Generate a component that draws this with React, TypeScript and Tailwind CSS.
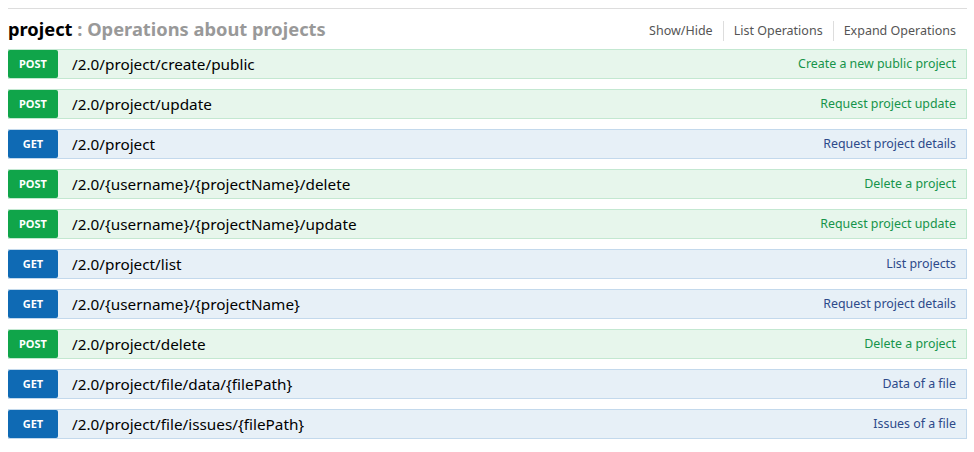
const ops = [
  { method: 'POST', path: '/2.0/project/create/public', summary: 'Create a new public project' },
  { method: 'POST', path: '/2.0/project/update', summary: 'Request project update' },
  { method: 'GET', path: '/2.0/project', summary: 'Request project details' },
  { method: 'POST', path: '/2.0/{username}/{projectName}/delete', summary: 'Delete a project' },
  { method: 'POST', path: '/2.0/{username}/{projectName}/update', summary: 'Request project update' },
  { method: 'GET', path: '/2.0/project/list', summary: 'List projects' },
  { method: 'GET', path: '/2.0/{username}/{projectName}', summary: 'Request project details' },
  { method: 'POST', path: '/2.0/project/delete', summary: 'Delete a project' },
  { method: 'GET', path: '/2.0/project/file/data/{filePath}', summary: 'Data of a file' },
  { method: 'GET', path: '/2.0/project/file/issues/{filePath}', summary: 'Issues of a file' },
];

function Operation({ method, path, summary }: { method: string; path: string; summary: string }) {
  const isGet = method === 'GET';
  return (
    <div
      className={
        isGet
          ? 'flex h-[30px] items-center border border-[#c3d9ec] bg-[#e7f0f7]'
          : 'flex h-[30px] items-center border border-[#c3e8d1] bg-[#e7f6ec]'
      }
    >
      <span
        className={
          isGet
            ? '-ml-px flex h-[28px] w-[50px] items-center justify-center rounded-[2px] bg-[#0f6ab4] text-[11px] font-bold text-white'
            : '-ml-px flex h-[28px] w-[50px] items-center justify-center rounded-[2px] bg-[#10a54a] text-[11px] font-bold text-white'
        }
      >
        {method}
      </span>
      <span className="ml-[14px] text-[15.3px] text-black">{path}</span>
      <span className={isGet ? 'ml-auto pr-[10px] text-[12.4px] text-[#2d4a8a]' : 'ml-auto pr-[10px] text-[12.4px] text-[#16944a]'}>
        {summary}
      </span>
    </div>
  );
}

export default function App() {
  return (
    <div className="bg-white pl-2 pt-2" style={{ fontFamily: '"Noto Sans", "Open Sans", sans-serif' }}>
      <div className="w-[959px] border-t border-[#ddd]">
        {/* Resource heading */}
        <div className="flex h-[40px] items-center justify-between">
          <h2 className="text-[18.3px] font-bold leading-none">
            <span className="text-black">project</span>
            <span className="text-[#999]"> : Operations about projects</span>
          </h2>
          <ul className="mt-1 flex items-center pr-[11px] text-[12.5px] text-[#555]">
            <li className="border-r border-[#ddd] pr-[10px] leading-[20px]">Show/Hide</li>
            <li className="border-r border-[#ddd] px-[10px] leading-[20px]">List Operations</li>
            <li className="pl-[10px] leading-[20px]">Expand Operations</li>
          </ul>
        </div>

        {/* Operations */}
        <div className="flex flex-col gap-[10px]">
          {ops.map((op, i) => (
            <Operation key={i} {...op} />
          ))}
        </div>
      </div>
    </div>
  );
}
